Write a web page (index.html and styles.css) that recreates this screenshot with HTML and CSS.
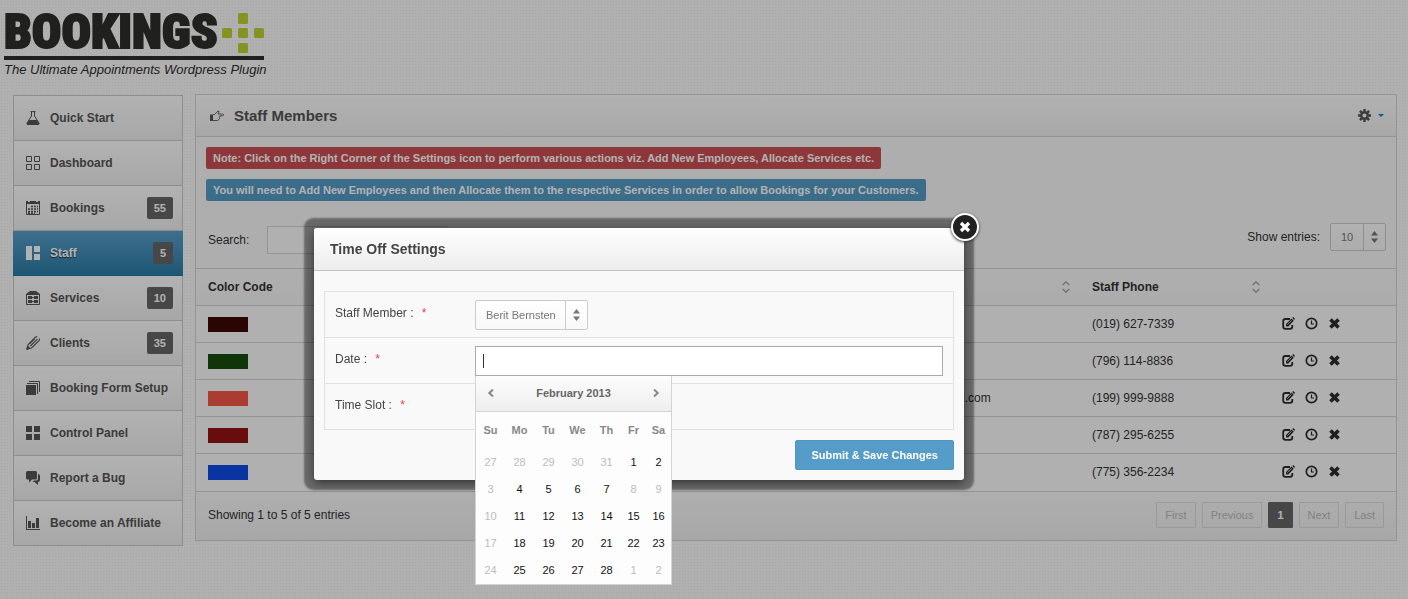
FILE: index.html
```html
<!DOCTYPE html>
<html lang="en">
<head>
<meta charset="utf-8">
<title>Bookings+ Staff Members</title>
<link rel="stylesheet" href="styles.css">
</head>
<body>
<svg class="sprite" aria-hidden="true">
  <symbol id="edit" viewBox="0 0 13 13"><path d="M8 2H3.500Q1.200 2 1.200 4.300V9.500Q1.200 11.800 3.500 11.800H8Q10.300 11.800 10.300 9.500V8" fill="none" stroke="currentColor" stroke-width="1.800"/><path d="M4 9.500V7L9.500 1.600 11.800 3.800 6.300 9.500ZM10.200 1 11.200 0 13 1.800 12.300 3Z" fill="currentColor"/><path d="M5.300 7.700 9.600 3.400" stroke="#f8f8f8" stroke-width=".7"/></symbol>
  <symbol id="clock" viewBox="0 0 13 13"><circle cx="6.500" cy="6.500" r="5.200" fill="none" stroke="currentColor" stroke-width="1.700"/><path d="M6.500 3.500V7H9" fill="none" stroke="currentColor" stroke-width="1.200"/></symbol>
  <symbol id="cross" viewBox="0 0 13 13"><path d="M2.500 2.500 10.500 10.500M10.500 2.500 2.500 10.500" stroke="currentColor" stroke-width="3.600"/></symbol>
  <symbol id="sort" viewBox="0 0 8 12"><path d="M.7 4 4 .8 7.300 4M.7 8 4 11.200 7.300 8" fill="none" stroke="currentColor" stroke-width="1.100"/></symbol>
  <symbol id="spin" viewBox="0 0 7 12"><path d="M0 4.500 3.500 0 7 4.500ZM0 7.500 3.500 12 7 7.500Z" fill="currentColor"/></symbol>
</svg>

<header class="brand">
  <div class="brand-top">
    <span class="brand-name">BOOKINGS</span>
    <svg class="plus" viewBox="0 0 42 41" aria-hidden="true"><g fill="#c0d230"><rect x="16" y="0" width="10" height="11" rx="1.500"/><rect x="0" y="15" width="10" height="10" rx="1.500"/><rect x="16" y="15" width="10" height="10" rx="1.500"/><rect x="32" y="15" width="10" height="10" rx="1.500"/><rect x="16" y="30" width="10" height="10" rx="1.500"/></g></svg>
  </div>
  <p class="tagline">The Ultimate Appointments Wordpress Plugin</p>
</header>

<div class="layout">
  <nav class="menu">
    <a href="#"><svg viewBox="0 0 14 14"><path d="M4.500.6H9.500M5.500 1V5L1 12Q.7 13.500 2 13.500H12Q13.300 13.500 13 12L8.500 5V1" fill="none" stroke="currentColor"/><path d="M3.300 9H10.700L13.300 12.500 12.500 14H1.500L.7 12.500Z"/></svg><span>Quick Start</span></a>
    <a href="#"><svg viewBox="0 0 14 14"><path d="M.5.5H5.500V5.500H.5ZM8.500.5H13.500V5.500H8.500ZM.5 8.500H5.500V13.500H.5ZM8.500 8.500H13.500V13.500H8.500Z" fill="none" stroke="currentColor"/></svg><span>Dashboard</span></a>
    <a href="#"><svg viewBox="0 0 14 14"><path d="M0 0H2V1H4V0H10V1H12V0H14V3H0Z"/><path d="M.5 3V13.500H13.500V3" fill="none" stroke="currentColor"/><path d="M5 5.500H12M2 8H12M2 10.500H12M2 12.300H9" fill="none" stroke="currentColor" stroke-width="1.500" stroke-dasharray="2 1"/></svg><span>Bookings</span><b class="badge">55</b></a>
    <a href="#" class="active"><svg viewBox="0 0 14 14"><path d="M0 0H6V14H0ZM8 0H14V6H8ZM8 8H14V14H8Z"/></svg><span>Staff</span><b class="badge">5</b></a>
    <a href="#"><svg viewBox="0 0 14 14"><path d="M0 3 4 0H10L14 3V4H0Z"/><path d="M.5 3V13.500H13.500V3" fill="none" stroke="currentColor"/><path d="M2 5H6V8H2ZM8 5H12V8H8ZM2 9H6V12H2ZM8 9H12V12H8ZM5 6H9V7H5ZM5 10H9V11H5Z"/></svg><span>Services</span><b class="badge">10</b></a>
    <a href="#"><svg viewBox="0 0 14 14"><path d="M.8 13.200 2.200 8.500 9.500.9 11.200.6M.8 13.200 5.500 12 13.200 4.500 13.500 2.500M4.300 10 11.500 2.800M3.600 7.800 9 2.300" fill="none" stroke="currentColor" stroke-width="1.100"/><path d="M0 14 1.700 9.500 4.500 12.500Z"/></svg><span>Clients</span><b class="badge">35</b></a>
    <a href="#"><svg viewBox="0 0 14 14"><path d="M0 4H10V14H0Z"/><path d="M1 2.500H11.500V13M3 .5H13.500V11" fill="none" stroke="currentColor"/></svg><span>Booking Form Setup</span></a>
    <a href="#"><svg viewBox="0 0 14 14"><path d="M0 0H6V6H0ZM8 0H14V6H8ZM0 8H6V14H0ZM8 8H14V14H8Z"/></svg><span>Control Panel</span></a>
    <a href="#"><svg viewBox="0 0 14 14"><path d="M1.500 0H9.500Q11 0 11 1.500V7Q11 8.500 9.500 8.500H6L3 11.500V8.500H1.500Q0 8.500 0 7V1.500Q0 0 1.500 0Z"/><path d="M12 3Q14 3 14 5V9Q14 11 12 11V14L8.500 11H6.500L8 9.500H10Q12 9.500 12 7.500Z"/></svg><span>Report a Bug</span></a>
    <a href="#"><svg viewBox="0 0 14 14"><path d="M0 0H1V13H14V14H0ZM2 5H5V12H2ZM6 7H9V12H6ZM10 2H13V12H10Z"/></svg><span>Become an Affiliate</span></a>
  </nav>

  <main class="panel">
    <div class="panel-head">
      <svg class="hand" viewBox="0 0 14 12" aria-hidden="true"><path d="M3 4.500H4.500L8 1Q9.200.6 9 2L8 4H12.500Q13.500 4.100 13.500 4.900 13.500 5.700 12.500 5.800H9.700Q10.300 7 9.500 7.700 9.700 9 8.700 9.300 8.500 10.500 7.500 10.500H3" fill="none" stroke="currentColor" stroke-width=".9"/><path d="M0 4.500H3V11H0Z"/></svg>
      <h1>Staff Members</h1>
      <button class="gear" aria-label="Settings"><svg viewBox="0 0 13 13"><circle cx="6.500" cy="6.500" r="3.300" fill="none" stroke="currentColor" stroke-width="2.400"/><path d="M6.500 0V2.500M6.500 10.500V13M0 6.500H2.500M10.500 6.500H13M1.900 1.900 3.600 3.600M9.400 9.400 11.100 11.100M11.100 1.900 9.400 3.600M3.600 9.400 1.900 11.100" stroke="currentColor" stroke-width="2.400"/></svg><i class="caret-down"></i></button>
    </div>
    <div class="notes">
      <p class="note red">Note: Click on the Right Corner of the Settings icon to perform various actions viz. Add New Employees, Allocate Services etc.</p>
      <p class="note blue">You will need to Add New Employees and then Allocate them to the respective Services in order to allow Bookings for your Customers.</p>
    </div>
    <div class="tools">
      <div class="find"><label for="search">Search:</label><input id="search" type="text"></div>
      <label class="show" for="entries">Show entries:</label>
      <div class="pick"><select id="entries"><option>10</option></select><svg aria-hidden="true"><use href="#spin"/></svg></div>
    </div>
    <table class="staff">
      <colgroup><col class="c-code"><col class="c-name"><col class="c-mail"><col class="c-phone"><col class="c-act"></colgroup>
      <thead><tr><th>Color Code</th><th>Name</th><th><div class="sorted">Email<svg><use href="#sort"/></svg></div></th><th><div class="sorted">Staff Phone<svg><use href="#sort"/></svg></div></th><th></th></tr></thead>
      <tbody>
        <tr><td><i class="swatch maroon"></i></td><td></td><td></td><td>(019) 627-7339</td><td><div class="acts"><button aria-label="Edit"><svg><use href="#edit"/></svg></button><button aria-label="Time off"><svg><use href="#clock"/></svg></button><button aria-label="Delete"><svg><use href="#cross"/></svg></button></div></td></tr>
        <tr><td><i class="swatch green"></i></td><td></td><td></td><td>(796) 114-8836</td><td><div class="acts"><button aria-label="Edit"><svg><use href="#edit"/></svg></button><button aria-label="Time off"><svg><use href="#clock"/></svg></button><button aria-label="Delete"><svg><use href="#cross"/></svg></button></div></td></tr>
        <tr><td><i class="swatch coral"></i></td><td></td><td>staffmember@mail.com</td><td>(199) 999-9888</td><td><div class="acts"><button aria-label="Edit"><svg><use href="#edit"/></svg></button><button aria-label="Time off"><svg><use href="#clock"/></svg></button><button aria-label="Delete"><svg><use href="#cross"/></svg></button></div></td></tr>
        <tr><td><i class="swatch crimson"></i></td><td></td><td></td><td>(787) 295-6255</td><td><div class="acts"><button aria-label="Edit"><svg><use href="#edit"/></svg></button><button aria-label="Time off"><svg><use href="#clock"/></svg></button><button aria-label="Delete"><svg><use href="#cross"/></svg></button></div></td></tr>
        <tr><td><i class="swatch royal"></i></td><td></td><td></td><td>(775) 356-2234</td><td><div class="acts"><button aria-label="Edit"><svg><use href="#edit"/></svg></button><button aria-label="Time off"><svg><use href="#clock"/></svg></button><button aria-label="Delete"><svg><use href="#cross"/></svg></button></div></td></tr>
      </tbody>
    </table>
    <div class="foot">
      <span>Showing 1 to 5 of 5 entries</span>
      <div class="pager"><button>First</button><button>Previous</button><button class="on">1</button><button>Next</button><button>Last</button></div>
    </div>
  </main>
</div>

<div class="overlay"></div>
<section class="modal" role="dialog" aria-labelledby="dlg">
  <button class="close" aria-label="Close"><svg viewBox="0 0 12 12"><path d="M2 2 10 10M10 2 2 10" stroke="#fff" stroke-width="3.200"/></svg></button>
  <h2 id="dlg">Time Off Settings</h2>
  <form class="modal-body">
    <div class="fields">
      <div class="field">
        <label for="member">Staff Member : <em>*</em></label>
        <div class="pick"><select id="member"><option>Berit Bernsten</option></select><svg aria-hidden="true"><use href="#spin"/></svg></div>
      </div>
      <div class="field">
        <label for="date">Date : <em>*</em></label>
        <div class="date">
          <input id="date" type="text"><i class="cursor"></i>
          <div class="cal">
            <div class="cal-head">
              <button type="button" aria-label="Previous month"><svg viewBox="0 0 8 8"><path d="M6 .5 2.300 4 6 7.500" fill="none" stroke="currentColor" stroke-width="2"/></svg></button>
              <strong>February 2013</strong>
              <button type="button" aria-label="Next month"><svg viewBox="0 0 8 8"><path d="M2 .5 5.700 4 2 7.500" fill="none" stroke="currentColor" stroke-width="2"/></svg></button>
            </div>
            <table>
              <thead><tr><th>Su</th><th>Mo</th><th>Tu</th><th>We</th><th>Th</th><th>Fr</th><th>Sa</th></tr></thead>
              <tbody>
                <tr><td class="off">27</td><td class="off">28</td><td class="off">29</td><td class="off">30</td><td class="off">31</td><td>1</td><td>2</td></tr>
                <tr><td class="off">3</td><td>4</td><td>5</td><td>6</td><td>7</td><td class="off">8</td><td class="off">9</td></tr>
                <tr><td class="off">10</td><td>11</td><td>12</td><td>13</td><td>14</td><td>15</td><td>16</td></tr>
                <tr><td class="off">17</td><td>18</td><td>19</td><td>20</td><td>21</td><td>22</td><td>23</td></tr>
                <tr><td class="off">24</td><td>25</td><td>26</td><td>27</td><td>28</td><td class="off">1</td><td class="off">2</td></tr>
              </tbody>
            </table>
          </div>
        </div>
      </div>
      <div class="field"><span class="label">Time Slot : <em>*</em></span></div>
    </div>
    <button type="button" class="submit">Submit &amp; Save Changes</button>
  </form>
</section>
</body>
</html>
```
FILE: styles.css
```css
* { box-sizing: border-box; }
body {
  margin: 0;
  min-height: 100vh;
  font: 12px/18px "Liberation Sans", Arial, sans-serif;
  color: #333;
  background-color: #fdfdfd;
  background-image: radial-gradient(circle, #f0f0f0 1px, transparent 1px);
  background-size: 3px 3px;
}
button, input, select { font: inherit; color: inherit; margin: 0; }
button { cursor: pointer; padding: 0; border: 0; background: none; }
svg { display: block; fill: currentColor; }
.sprite { position: absolute; width: 0; height: 0; }

.brand { padding: 11px 4px 0; height: 94px; color: #2e2e2c; }
.brand-top {
  display: flex;
  width: 260px;
  height: 49px;
  justify-content: space-between;
  border-bottom: 4px solid #2e2e2c;
}
.brand-name {
  font: 900 49px/42px "Roboto Condensed", "Noto Sans CJK SC", "Liberation Sans", sans-serif;
  -webkit-text-stroke: 2px #2e2e2c;
}
.plus { width: 42px; height: 41px; margin-top: 2px; }
.tagline { margin: 0; font-size: 13px; font-style: italic; line-height: 20px; }

.layout { display: grid; grid-template-columns: 170px minmax(0, 1fr); gap: 12px; padding: 0 11px 0 13px; align-items: start; }
.menu { margin-top: 1px; border: 1px solid #ccc; border-bottom: 0; }
.menu a {
  display: flex;
  align-items: center;
  gap: 10px;
  height: 45px;
  padding: 0 9px 0 12px;
  border-bottom: 1px solid #ccc;
  background: linear-gradient(#ffffff, #f0f0f0);
  color: #555;
  font-weight: bold;
  text-decoration: none;
}
.menu svg { width: 14px; height: 14px; flex: none; }
.menu .active { background: linear-gradient(#5aa0ca, #2a7da8); color: #fff; margin: 0 -1px; padding: 0 10px 0 13px; border-color: #2a76a0; text-shadow: 0 1px 1px #234; }
.badge { margin-left: auto; padding: 2px 7px; border-radius: 2px; background: #666; color: #fff; font-size: 11px; text-shadow: none; }

.panel { border: 1px solid #d4d4d4; background: #fafafa; }
.panel-head { display: flex; align-items: center; height: 42px; padding: 0 12px 0 14px; border-bottom: 1px solid #d4d4d4; background: linear-gradient(#fff, #f0f0f0); }
.hand { width: 14px; height: 12px; color: #555; }
h1, h2 { margin: 0; font-size: 14px; line-height: 20px; color: #444; }
h1 { margin-left: 10px; font-size: 15px; color: #555; }
.gear { display: flex; align-items: center; gap: 7px; margin-left: auto; color: #555; }
.gear svg { width: 13px; height: 13px; }
.caret-down { border: 3px solid transparent; border-top-color: #0088cc; border-bottom: 0; }
.notes { display: grid; justify-items: start; gap: 10px; padding: 10px; }
.note { margin: 0; padding: 2px 7px; border-radius: 2px; color: #fff; font-size: 11px; font-weight: bold; line-height: 18px; }
.red { background: #cb5053; }
.blue { background: #559dc7; }
.tools { display: flex; align-items: center; height: 57px; padding: 0 10px 5px 12px; }
.find { display: flex; align-items: center; gap: 18px; padding-top: 5px; }
.find input { width: 180px; height: 28px; border: 1px solid #d4d4d4; background: #fcfcfc; }
.show { margin-left: auto; margin-right: 10px; }
.pick { position: relative; width: max-content; color: #777; font-size: 11px; }
.pick select {
  appearance: none;
  height: 28px;
  padding: 0 31px 0 10px;
  border: 1px solid #ccc;
  border-radius: 2px;
  background: linear-gradient(#ccc, #ccc) right 21px top / 1px 100% no-repeat, linear-gradient(#fff, #f8f8f8);
}
.pick svg { position: absolute; right: 8px; top: 8px; width: 7px; height: 12px; pointer-events: none; }

.staff { width: 100%; table-layout: fixed; border-collapse: collapse; }
.c-code { width: 150px; }
.c-name { width: 506px; }
.c-phone { width: 190px; }
.c-act { width: 126px; }
.staff th, .staff td { height: 37px; padding: 0 10px 0 12px; border-top: 1px solid #d4d4d4; text-align: left; }
.staff thead { background: linear-gradient(#fafafa, #f6f6f6); }
.staff tbody { background: #fcfcfc; }
.sorted { display: flex; justify-content: space-between; align-items: center; }
.sorted svg { width: 8px; height: 12px; color: #999; }
.swatch { display: block; width: 40px; height: 15px; }
.maroon { background: #3e0707; }
.green { background: #174d0d; }
.coral { background: #f55648; }
.crimson { background: #951213; }
.royal { background: #114bea; }
.acts { display: flex; gap: 10px; padding-bottom: 2px; }
.acts svg { width: 13px; height: 13px; color: #2d2d2d; }
.foot { display: flex; justify-content: space-between; align-items: center; height: 49px; padding: 0 12px 2px; border-top: 1px solid #d4d4d4; background: linear-gradient(#fafafa, #f0f0f0); }
.pager { display: flex; gap: 6px; }
.pager button { height: 26px; padding: 0 8px; border: 1px solid #ddd; border-radius: 1px; color: #bbb; font-size: 11px; }
.pager .on { border-color: #666; background: #666; color: #fff; font-weight: bold; }

.overlay { position: fixed; inset: 0; z-index: 10; background: rgba(0, 0, 0, .3); }
.modal {
  position: absolute;
  z-index: 20;
  left: 314px;
  top: 228px;
  width: 650px;
  border-radius: 3px;
  background: #f9f9f9;
  box-shadow: 0 3px 10px rgba(0, 0, 0, .5), 0 0 2px 10px rgba(0, 0, 0, .4);
}
h2 { padding: 11px 16px; border-bottom: 1px solid #c4c4c4; border-radius: 3px 3px 0 0; background: linear-gradient(#fff, #ececec); }
.close {
  position: absolute;
  right: -15px;
  top: -15px;
  display: grid;
  place-items: center;
  width: 28px;
  height: 28px;
  border: 2px solid #fff;
  border-radius: 50%;
  background: #222;
  box-shadow: 0 1px 3px #333;
}
.close svg { width: 12px; height: 12px; }
.modal-body { display: grid; gap: 10px; padding: 20px 10px 10px; }
.fields { border: 1px solid #e2e2e2; color: #444; }
.field { display: grid; grid-template-columns: 140px 1fr; align-items: center; min-height: 46px; padding: 0 10px; }
.field:first-child { min-height: 45px; }
.field + .field { border-top: 1px solid #e2e2e2; }
.field label, .label { padding-bottom: 4px; }
.field em { margin-left: 5px; color: #e04545; font-style: normal; }
.field .pick select { height: 30px; }
.field .pick svg { top: 9px; }
.date { position: relative; }
.date input { display: block; width: 100%; height: 30px; padding: 0 8px; border: 1px solid #aaa; background: #fff; }
.cursor { position: absolute; left: 8px; top: 8px; width: 1px; height: 14px; background: #333; }
.cal { position: absolute; z-index: 1; left: 0; top: 100%; width: 197px; border: 1px solid #d4d4d4; border-top: 0; background: #fdfdfd; font-size: 11px; }
.cal-head { display: flex; justify-content: space-between; align-items: center; height: 36px; padding: 0 11px; border-bottom: 1px solid #d4d4d4; background: linear-gradient(#fdfdfd, #eee); color: #666; }
.cal-head svg { width: 8px; height: 8px; color: #888; }
.cal table { width: 100%; border-collapse: collapse; table-layout: fixed; text-align: center; }
.cal th { width: 29px; height: 37px; padding: 0; color: #888; }
.cal th:nth-child(n+6) { width: 25px; }
.cal td { height: 27px; padding: 0; color: #111; }
.cal .off { color: #bbb; }
.submit { justify-self: end; height: 30px; padding: 0 15px; border: 1px solid #5096c2; border-radius: 2px; background: #569cc9; color: #fff; font-size: 11px; font-weight: bold; }
```
